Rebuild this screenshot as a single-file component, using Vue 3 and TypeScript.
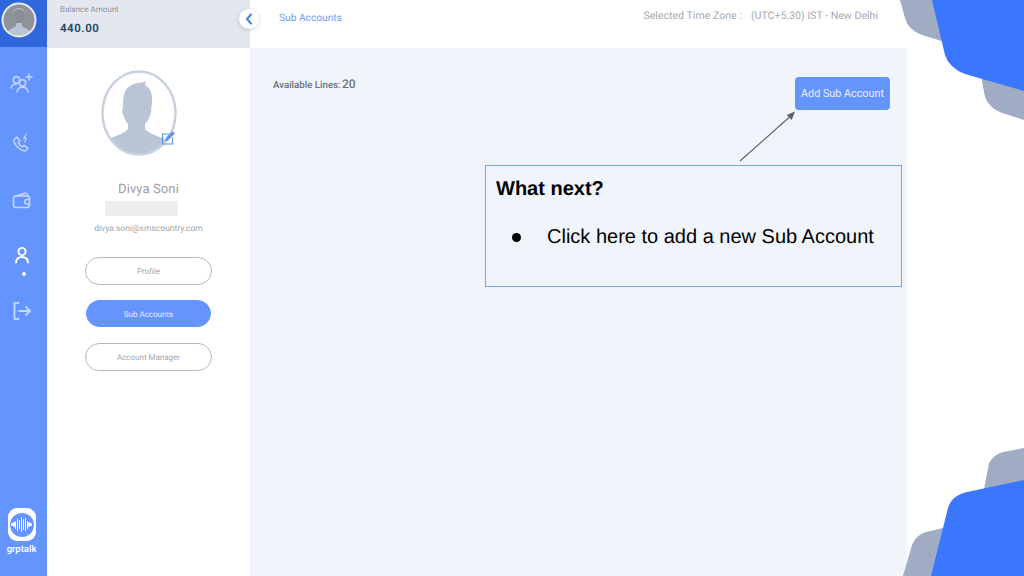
<script setup lang="ts">
const menu: { label: string; active: boolean }[] = [
  { label: 'Profile', active: false },
  { label: 'Sub Accounts', active: true },
  { label: 'Account Manager', active: false },
]
const bars: number[] = [3, 5, 8, 12, 9, 15, 11, 13, 8, 5, 3]
</script>

<template>
  <div class="page">
    <aside class="rail">
      <div class="rail-top">
        <svg width="38" height="38" viewBox="0 0 38 38">
          <defs>
            <clipPath id="topclip"><circle cx="19" cy="19" r="16" /></clipPath>
          </defs>
          <circle cx="19" cy="19" r="16" fill="#8f9398" />
          <g clip-path="url(#topclip)">
            <path d="M19 7c4 0 6 3 6 7 0 3-1 6-3 8v3c2 2 8 3 10 8v5H6v-5c2-5 8-6 10-8v-3c-2-2-3-5-3-8 0-4 2-7 6-7z" fill="#b9c4d4" />
            <path d="M19 8c4 0 6 3 6 6.500 0 3-1 5.500-3 7.500h-6c-2-2-3-4.500-3-7.500C13 11 15 8 19 8z" fill="#8b8f95" />
          </g>
          <circle cx="19" cy="19" r="16.500" fill="none" stroke="#e6ebf2" stroke-width="2" />
        </svg>
      </div>
      <nav class="rail-nav">
        <svg class="ico i1" width="24" height="22" viewBox="0 0 24 22" fill="none" stroke="#c4d6ff" stroke-width="1.500" stroke-linecap="round">
          <circle cx="6.500" cy="8" r="3.200" />
          <path d="M1 16c.5-2.800 2.500-4 5.500-4" />
          <circle cx="12.500" cy="11" r="3.200" />
          <path d="M7 20c.5-3.200 2.500-4.800 5.500-4.800s5 1.600 5.500 4.800" />
          <path d="M19 2v6M16 5h6" />
        </svg>
        <svg class="ico i2" width="22" height="22" viewBox="0 0 22 22" fill="none" stroke="#c4d6ff" stroke-width="1.500" stroke-linecap="round" stroke-linejoin="round">
          <path d="M4 6.500 6 5l2.800 4-1.500 1.600c.8 2 2.200 3.400 4.200 4.300l1.600-1.500 3.700 2.700-1.400 2c-.8.900-2 1-3.200.5C8 17 4.500 13.500 3 9.500c-.4-1.200 0-2.200 1-3z" />
          <path d="M15.500 1.500 12.500 6.500h3L13.500 10.500" fill="#c4d6ff" stroke-width="1" />
        </svg>
        <svg class="ico i3" width="22" height="20" viewBox="0 0 22 20" fill="none" stroke="#c4d6ff" stroke-width="1.500" stroke-linecap="round" stroke-linejoin="round">
          <path d="M3 6.500 14 3.200c1-.3 2 .2 2.300 1.300l.4 1.500" />
          <rect x="2.500" y="6" width="16" height="11.500" rx="2.500" />
          <path d="M18.500 9.500h-2.500a2.200 2.200 0 0 0 0 4.500h2.500" />
        </svg>
        <div class="ico i4">
          <svg width="22" height="20" viewBox="0 0 22 20" fill="none" stroke="#ffffff" stroke-width="1.900" stroke-linecap="round">
            <circle cx="11" cy="6.500" r="3.600" />
            <path d="M5 17.500c.3-3.500 2.600-5.500 6-5.500s5.700 2 6 5.500" />
          </svg>
          <span class="dot"></span>
        </div>
        <svg class="ico i5" width="22" height="20" viewBox="0 0 22 20" fill="none" stroke="#c4d6ff" stroke-width="1.800" stroke-linecap="round" stroke-linejoin="round">
          <path d="M7.500 2H3.500v16h4" />
          <path d="M8 10h11M15 6l4 4-4 4" />
        </svg>
      </nav>
      <div class="brand">
        <div class="brand-mark">
          <div class="brand-disc">
            <i v-for="(h, n) in bars" :key="n" :style="{ height: h + 'px' }"></i>
          </div>
        </div>
        <span class="brand-name">grptalk</span>
      </div>
    </aside>

    <section class="panel">
      <div class="balance">
        <span class="balance-label">Balance Amount</span>
        <strong class="balance-value">440.00</strong>
      </div>
      <div class="profile">
        <div class="portrait">
          <svg width="78" height="88" viewBox="0 0 78 88">
            <defs>
              <clipPath id="bigclip"><ellipse cx="39" cy="44" rx="36.500" ry="41.500" /></clipPath>
            </defs>
            <g clip-path="url(#bigclip)">
              <path d="M24 26c1-6 6-11 14-12 3 0 6-1 8-2l-1 4c5 3 7 8 7 13 0 5 0 8-1 11 1 1 0 4-1 6-1 4-3 7-5 9v5c3 4 12 7 20 10l8 24H0l8-24c8-3 17-6 20-10v-5c-2-2-4-6-5-10-1 0-1-5 0-7 0-4 0-8 1-12z" fill="#b9c5d6" />
            </g>
            <ellipse cx="39" cy="44" rx="36.500" ry="41.500" fill="none" stroke="#c8d2df" stroke-width="2.500" />
          </svg>
          <svg class="edit" width="14" height="14" viewBox="0 0 14 14" fill="none" stroke="#5f90ee" stroke-width="1.200">
            <path d="M8 3H1.500v10h10V6.500" />
            <path d="M5 9.500 5.500 7 11.500 1 13 2.500 7 8.500z" fill="#5f90ee" />
          </svg>
        </div>
        <h2 class="name">Divya Soni</h2>
        <div class="redacted"></div>
        <p class="email">divya.soni@smscountry.com</p>
        <ul class="menu">
          <li v-for="item in menu" :key="item.label" :class="['pill', { active: item.active }]">{{ item.label }}</li>
        </ul>
      </div>
      <button class="collapse" type="button" aria-label="Collapse">
        <svg width="8" height="12" viewBox="0 0 8 12" fill="none" stroke="#4f82e6" stroke-width="2.200" stroke-linecap="round" stroke-linejoin="round">
          <path d="M6 1.500 2 6l4 4.500" />
        </svg>
      </button>
    </section>

    <main class="main">
      <header class="top">
        <span class="crumb">Sub Accounts</span>
        <span class="zone"><span class="zone-label">Selected Time Zone :</span>(UTC+5:30) IST - New Delhi</span>
      </header>
      <div class="content">
        <div class="lines">Available Lines: <b>20</b></div>
        <button class="add" type="button">Add Sub Account</button>
      </div>
    </main>

    <svg class="arrow" width="70" height="60" viewBox="0 0 70 60">
      <path d="M5 52 54 8.500" stroke="#5f6368" stroke-width="1.200" fill="none" />
      <path d="M60 2.500 51.700 6 56.700 11z" fill="#5f6368" />
    </svg>
    <div class="callout">
      <h3>What next?</h3>
      <ul>
        <li><span class="bullet"></span>Click here to add a new Sub Account</li>
      </ul>
    </div>

    <svg class="decor" width="124" height="576" viewBox="900 0 124 576">
      <path d="M900 0 905 18Q908 30 922 35L1024 66V0Z" fill="#a0acc4" />
      <path d="M980 70 985 97Q989 108 1002 113L1024 120V70Z" fill="#a0acc4" />
      <path d="M932 0 945 55Q949 68 965 74L1024 91V0Z" fill="#3b76ff" />
      <path d="M982 500 989 463Q993 455 1003 452L1024 448V500Z" fill="#a0acc4" />
      <path d="M903 576 912 545Q916 535 926 532L960 524V576Z" fill="#a0acc4" />
      <path d="M931 576 948 508Q952 495 967 492L1024 480V576Z" fill="#3b76ff" />
    </svg>
  </div>
</template>

<style>
html,
body {
  margin: 0;
  background: #ffffff;
}
</style>

<style scoped>
.page {
  position: relative;
  display: flex;
  width: 1024px;
  height: 576px;
  overflow: hidden;
  background: #ffffff;
  font-family: Roboto, "Liberation Sans", sans-serif;
  text-rendering: geometricPrecision;
}

.rail {
  display: flex;
  flex-direction: column;
  flex: none;
  width: 47px;
  background: #6495ff;
}
.rail-top {
  box-sizing: border-box;
  height: 47px;
  padding-top: 1px;
  background: #2f66dc;
  line-height: 0;
}
.rail-nav {
  display: flex;
  flex: 1;
  flex-direction: column;
  align-items: center;
  padding-top: 25px;
}
.ico {
  display: block;
  flex: none;
  margin-left: -4px;
}
.i2 {
  margin-top: 38px;
  margin-left: -3px;
}
.i3 {
  margin-top: 36px;
  margin-left: -3px;
}
.i4 {
  display: flex;
  flex-direction: column;
  align-items: center;
  margin-top: 35px;
  margin-left: -3px;
}
.dot {
  width: 4px;
  height: 4px;
  margin-top: 7px;
  margin-left: 3px;
  border-radius: 50%;
  background: #ffffff;
}
.i5 {
  margin-top: 25px;
  margin-left: -3px;
}
.brand {
  display: flex;
  flex-direction: column;
  align-items: center;
  padding-bottom: 20px;
  margin-left: -4px;
}
.brand-mark {
  display: flex;
  align-items: center;
  justify-content: center;
  width: 28px;
  height: 33px;
  border-radius: 9px;
  background: #ffffff;
}
.brand-disc {
  display: flex;
  align-items: center;
  justify-content: center;
  gap: .6px;
  width: 24px;
  height: 24px;
  border-radius: 50%;
  background: #6495ff;
}
.brand-disc i {
  display: block;
  width: 1.300px;
  border-radius: 1px;
  background: #ffffff;
}
.brand-name {
  margin-top: 3px;
  font-size: 9.500px;
  font-weight: 500;
  line-height: 12px;
  color: #ffffff;
}

.panel {
  position: relative;
  flex: none;
  width: 203px;
}
.balance {
  display: flex;
  flex-direction: column;
  box-sizing: border-box;
  height: 48px;
  padding: 4px 13px 0;
  background: #e3e8ef;
}
.balance-label {
  font-size: 8px;
  line-height: 12px;
  color: #8f959e;
}
.balance-value {
  margin-top: 4px;
  font-size: 11.500px;
  font-weight: 700;
  letter-spacing: .5px;
  line-height: 16px;
  color: #2f4a72;
}
.profile {
  display: flex;
  flex-direction: column;
  align-items: center;
  padding-top: 21px;
}
.portrait {
  position: relative;
  width: 78px;
  height: 88px;
  margin-right: 19px;
  line-height: 0;
}
.edit {
  position: absolute;
  top: 62px;
  left: 61px;
}
.name {
  margin: 24px 0 0;
  font-size: 13px;
  font-weight: 400;
  letter-spacing: .1px;
  line-height: 18px;
  color: #9a9ea6;
}
.redacted {
  width: 73px;
  height: 15px;
  margin-top: 2px;
  margin-right: 14px;
  background: #eeeeee;
}
.email {
  margin: 6px 0 0;
  font-size: 8.500px;
  line-height: 14px;
  color: #a0a4ab;
}
.menu {
  display: flex;
  flex-direction: column;
  gap: 15px;
  margin: 21px 0 0;
  padding: 0;
  list-style: none;
}
.pill {
  box-sizing: border-box;
  width: 127px;
  height: 28px;
  border: 1.200px solid #b4b8c0;
  border-radius: 14px;
  font-size: 8px;
  line-height: 27.500px;
  text-align: center;
  color: #a4a8af;
  background: #ffffff;
}
.pill.active {
  width: 125px;
  height: 27px;
  margin: 0 1px 1px;
  border-color: #6495ff;
  background: #6495ff;
  color: #e6eeff;
}
.collapse {
  position: absolute;
  top: 9px;
  left: 192px;
  display: flex;
  align-items: center;
  justify-content: center;
  width: 20px;
  height: 20px;
  padding: 0;
  border: 0;
  border-radius: 50%;
  background: #ffffff;
  box-shadow: 0 1px 4px rgba(90, 110, 140, .3);
}

.main {
  display: flex;
  flex: none;
  flex-direction: column;
  width: 657px;
}
.top {
  display: flex;
  align-items: flex-start;
  justify-content: space-between;
  box-sizing: border-box;
  height: 48px;
  padding: 9px 29px 0;
  font-size: 10.600px;
  line-height: 13px;
}
.crumb {
  padding-top: 3px;
  font-size: 10.200px;
  color: #6e9bf5;
}
.zone {
  color: #a6aab1;
}
.zone-label {
  margin-right: 9px;
}
.content {
  display: flex;
  flex: 1;
  align-items: flex-start;
  justify-content: space-between;
  padding: 29px 17px 0 23px;
  background: #f0f5fc;
}
.lines {
  font-size: 9.700px;
  font-weight: 500;
  line-height: 14px;
  color: #6c7078;
}
.lines b {
  margin-left: -1px;
  font-size: 12px;
  font-weight: 500;
}
.add {
  width: 95px;
  height: 33px;
  padding: 0;
  border: 0;
  border-radius: 4px;
  background: #6495ff;
  color: #e8efff;
  font-family: inherit;
  font-size: 10.800px;
}

.arrow {
  position: absolute;
  top: 109px;
  left: 735px;
}
.callout {
  position: absolute;
  top: 165px;
  left: 485px;
  box-sizing: border-box;
  width: 417px;
  height: 122px;
  padding: 11px 10px 0;
  border: 1.300px solid #78a5e6;
  font-family: "Liberation Sans", Arial, sans-serif;
  color: #000000;
}
.callout h3 {
  margin: 0;
  font-size: 20px;
  font-weight: 700;
  line-height: 24px;
}
.callout ul {
  margin: 24px 0 0;
  padding: 0 0 0 16px;
  list-style: none;
  font-size: 20px;
  line-height: 24px;
}
.callout li {
  display: flex;
  align-items: center;
  white-space: nowrap;
}
.bullet {
  flex: none;
  width: 9px;
  height: 9px;
  margin-right: 26px;
  border-radius: 50%;
  background: #000000;
}

.decor {
  position: absolute;
  top: 0;
  right: 0;
}
</style>
